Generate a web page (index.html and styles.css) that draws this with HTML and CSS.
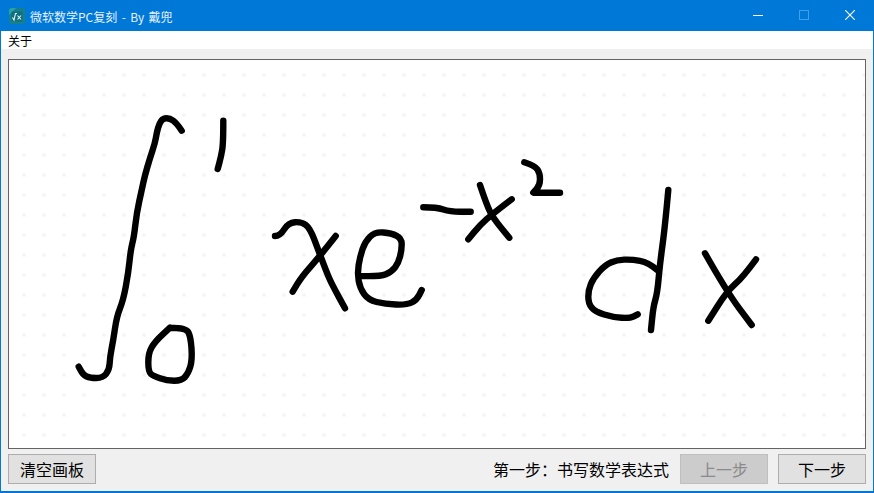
FILE: index.html
```html
<!DOCTYPE html>
<html lang="zh">
<head>
    <meta charset="UTF-8">
    <title>微软数学PC复刻 - By 戴兜</title>
    <link rel="stylesheet" href="styles.css">
</head>
<body>
    <div class="window">
        <div class="titlebar">
            <svg class="app-icon" width="16" height="16" viewBox="0 0 16 16">
                <rect x="0" y="0" width="16" height="16" rx="3" fill="#17808f"/>
                <path d="M0 7 L7 0 H3 Q0 0 0 3 Z" fill="#2aa3a6"/>
                <rect x="2.5" y="3.5" width="11" height="10" fill="#0f6f80"/>
                <path d="M3.5 9.5 L5 12 L6.5 5.5 H8" fill="none" stroke="#e8f6f6" stroke-width="1.1"/>
                <path d="M8.5 7.5 L12 11.5 M12 7.5 L8.5 11.5" fill="none" stroke="#e8f6f6" stroke-width="1.1"/>
            </svg>
            <span class="title">微软数学PC复刻 - By 戴兜</span>
            <div class="win-buttons">
                <div class="win-btn">
                    <svg width="10" height="10" viewBox="0 0 10 10"><path d="M0 5.5 H10" stroke="#fff" stroke-width="1"/></svg>
                </div>
                <div class="win-btn">
                    <svg width="10" height="10" viewBox="0 0 10 10"><rect x="0.5" y="0.5" width="9" height="9" fill="none" stroke="#3f9fea" stroke-width="1"/></svg>
                </div>
                <div class="win-btn">
                    <svg width="10" height="10" viewBox="0 0 10 10"><path d="M0 0 L10 10 M10 0 L0 10" stroke="#fff" stroke-width="1.1"/></svg>
                </div>
            </div>
        </div>

        <div class="menubar"><span class="menu-item">关于</span></div>

        <div class="content">
            <div class="board">
                <canvas id="ink" width="856" height="388"></canvas>
            </div>
            <div class="toolbar">
                <button class="btn">清空画板</button>
                <span class="step-label">第一步：书写数学表达式</span>
                <button class="btn btn-disabled">上一步</button>
                <button class="btn">下一步</button>
            </div>
        </div>
    </div>
    <script src="script.js"></script>
</body>
</html>
```

FILE: styles.css
```css
html, body {
    margin: 0;
    height: 100%;
    overflow: hidden;
}

body {
    font-family: "Noto Sans CJK SC", "Liberation Sans", sans-serif;
    color: #000;
}

.window {
    box-sizing: border-box;
    width: 874px;
    height: 493px;
    display: flex;
    flex-direction: column;
    border: 1px solid #0078d7;
    border-bottom-width: 2px;
    background-color: #f0f0f0;
}

.titlebar {
    height: 30px;
    flex: none;
    display: flex;
    align-items: center;
    background-color: #0078d7;
    color: #e6f2fb;
    font-size: 12px;
}

.app-icon {
    margin-left: 8px;
    margin-right: 5px;
}

.title {
    word-spacing: 1.7px;
}

.win-buttons {
    display: flex;
    align-self: flex-start;
    margin-left: auto;
}

.win-btn {
    width: 46px;
    height: 28px;
    display: flex;
    align-items: center;
    justify-content: center;
}

.menubar {
    height: 18px;
    flex: none;
    display: flex;
    align-items: center;
    background-color: #fff;
    font-size: 12px;
}

.menu-item {
    margin-left: 7px;
}

.content {
    flex: 1;
    display: flex;
    flex-direction: column;
    padding: 10px 7px 6px 7px;
}

.board {
    height: 390px;
    flex: none;
    box-sizing: border-box;
    border: 1px solid #646464;
    background-color: #fff;
    background-image: radial-gradient(circle at center, #f4f4f4 0, #f4f4f4 1.2px, transparent 2.4px);
    background-size: 20px 20px;
    background-position: 5px 5px;
}

#ink {
    display: block;
}

.toolbar {
    display: flex;
    align-items: center;
    margin-top: 5px;
}

.btn {
    width: 88px;
    height: 30px;
    padding: 0;
    box-sizing: border-box;
    border: 1px solid #adadad;
    border-radius: 0;
    background-color: #e1e1e1;
    color: #000;
    font-family: inherit;
    font-size: 16px;
}

.btn-disabled {
    background-color: #cccccc;
    border-color: #bfbfbf;
    color: #8a8a8a;
    margin-right: 10px;
}

.step-label {
    margin-left: auto;
    margin-right: 11px;
    font-size: 16px;
}
```

FILE: script.js
```js
// strokes in window coordinates, the board starts at 9,60
const strokes = [
    // integral and limits
    [[181.7,130.7],[176.7,123.3],[170,118.3],[163.3,118.3],[159.3,123.3],[156.7,133],[155,143],[150,158],[145,175],[141.7,190],[136.7,213],[134,236.7],[130.7,250],[128.3,273],[123.3,300],[116.7,316.7],[113.3,340],[110,356.7],[109.3,370],[102.7,378],[90,378],[83.3,375],[78.7,366.7]],
    [[223.3,120.7],[223.3,143.3],[221,156.7],[217.7,169]],
    [[170,327.7],[186,327.7],[190.7,336.7],[192.3,360],[188.3,373.3],[181.7,380.7],[166.7,380.7],[153.3,376],[148.3,371.7],[148.3,353],[155,341.7],[170,327.7]],
    // x e
    [[275,236],[280,236],[288.3,222.7],[301.7,221.7],[310,228.3],[318.3,250],[328.3,276.7],[335,290],[345,308.3]],
    [[335.7,236],[318.3,258],[301.7,276.7],[292.7,291.7]],
    [[360,276],[380,276.7],[391.7,271.7],[398.3,263.3],[401.7,250],[401.7,238.3],[391.7,233.3],[375,231.7],[365,241.7],[360,256.7],[357.3,273.3],[360,288.3],[368.3,300],[385,304],[406.7,305],[416.7,300],[421.7,290]],
    // exponent
    [[423.3,207.3],[436.7,207.3],[450,211.7],[470.7,211.7]],
    [[480,185],[486.7,205],[493.3,218.3],[509.3,237.7]],
    [[511.7,199.3],[493.3,213.3],[480,225],[468.3,239.3]],
    [[524.3,162.3],[535,165.7],[540,173.3],[540,185],[533.3,192.7],[533.3,192.7],[560,192.7]],
    // d x
    [[668.3,190],[665,226.7],[660,263.3],[657.3,293.3],[653.3,306.7],[651,330]],
    [[657.3,270],[648.3,262.3],[631.7,259.3],[616.7,260],[605,265],[593.3,278.3],[588.3,290],[588.3,303.3],[595,311.7],[613.3,317.3],[630,318.3],[637.7,314.3]],
    [[705,253.3],[726.7,291.7],[751.7,325]],
    [[756,259.3],[743.3,276.7],[726.7,291.7],[708.3,320.7]]
];

const ctx = document.getElementById('ink').getContext('2d');
ctx.translate(-9, -60);
ctx.lineWidth = 6.4;
ctx.lineCap = 'round';
ctx.lineJoin = 'round';

// smooth each stroke through the midpoints of its segments
strokes.forEach(points => {
    ctx.beginPath();
    ctx.moveTo(points[0][0], points[0][1]);
    for (let i = 1; i < points.length - 1; i++) {
        const midX = (points[i][0] + points[i + 1][0]) / 2;
        const midY = (points[i][1] + points[i + 1][1]) / 2;
        ctx.quadraticCurveTo(points[i][0], points[i][1], midX, midY);
    }
    const last = points[points.length - 1];
    ctx.lineTo(last[0], last[1]);
    ctx.stroke();
});
```
